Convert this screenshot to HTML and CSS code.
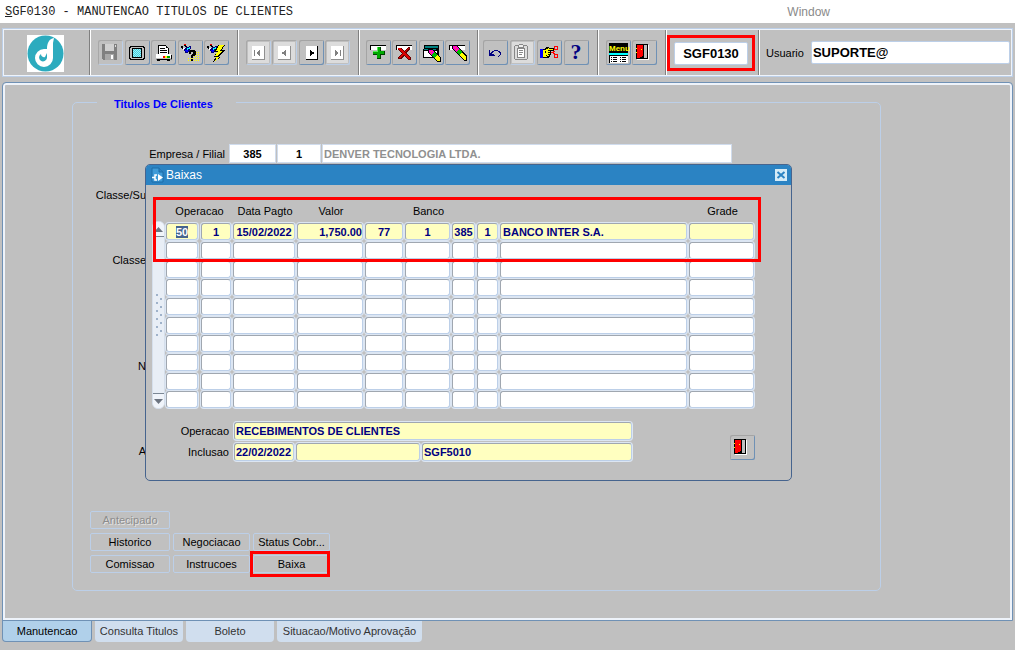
FILE: index.html
```html
<!DOCTYPE html>
<html lang="pt-br">
<head>
	<meta charset="utf-8">
	<title>SGF0130 - MANUTENCAO TITULOS DE CLIENTES</title>
	<link rel="stylesheet" href="styles.css">
	<script src="baixas.js" defer></script>
</head>
<body>

	<header class="titlebar">
		<h1><u>S</u>GF0130 - MANUTENCAO TITULOS DE CLIENTES</h1>
		<span class="window-menu">Window</span>
	</header>

	<div class="toolbar">
		<div class="logo">
			<svg width="37" height="37" viewBox="0 0 37 37">
				<rect width="37" height="37" fill="#fff"/>
				<circle cx="18.5" cy="18.5" r="18" fill="#2cabbe"/>
				<path d="M27 3 C22 4 20 8 20 14 H17 A9 9 0 1 0 26 23 V8 Z" fill="#fff"/>
				<path d="M20 18 V23 A4 4 0 1 1 14 19 A3 3 0 0 0 18 22 Z" fill="#2cabbe"/>
			</svg>
		</div>

		<div class="group group-file">
			<button class="tool off" aria-label="Salvar"><svg viewBox="0 0 25 25">
				<path d="M4 4H19V20H5L4 19Z" fill="#808080"/><path d="M7 4H16V11H7Z" fill="#d0d0d0"/><path d="M7 14H16V20H7Z" fill="#a8a8a8"/><path d="M13 15H15V19H13Z" fill="#fff"/><path d="M17 5H18V7H17Z" fill="#ddd"/>
			</svg></button>
			<button class="tool" aria-label="Tela"><svg viewBox="0 0 25 25">
				<defs>
					<pattern id="cyan-dots" width="2" height="2" patternUnits="userSpaceOnUse"><path d="M0 0H2V2H0Z" fill="#a0f0f8"/><path d="M0 0H1V1H0ZM1 1H2V2H1Z" fill="#40d0e0"/></pattern>
					<pattern id="yellow-dots" width="2" height="2" patternUnits="userSpaceOnUse"><path d="M0 0H1V1H0Z" fill="#ff0"/></pattern>
				</defs>
				<path d="M5 6H19V7H20V19H19V20H5V19H4V7H5Z" fill="#000"/><path d="M6 7H18V8H19V18H18V19H6V18H5V8H6Z" fill="#c0c0c0"/><path d="M7 8H17V18H7Z" fill="#000"/><path d="M8 9H16V17H8Z" fill="url(#cyan-dots)"/>
			</svg></button>
			<button class="tool" aria-label="Imprimir"><svg viewBox="0 0 25 25">
				<path d="M7 5H15V6H16V7H17V8H18V15H7Z" fill="#000"/><path d="M8 6H15V8H17V14H8Z" fill="#fff"/><path d="M9 8H14V9H9ZM9 10H16V11H9ZM9 12H16V13H9Z" fill="#000"/><path d="M5 14H20V15H21V20H5Z" fill="#808080"/><path d="M5 14H20V19H5Z" fill="#fff"/><path d="M5 18H20V19H5Z" fill="#c0c0c0"/><path d="M12 16H14V18H12Z" fill="red"/><path d="M14 16H16V18H14Z" fill="#ff0"/><path d="M16 16H19V18H16Z" fill="#0a0"/><path d="M6 19H19V20H6ZM6 20H9V21H6ZM16 20H19V21H16ZM20 15H21V19H20Z" fill="#000"/>
			</svg></button>
			<button class="tool" aria-label="Entrar consulta"><svg viewBox="0 0 25 25">
				<g id="torch"><path d="M3 6H5V8H7V9H4V8H3ZM6 4H8V6H9V8H8V7H7V6H6Z" fill="#000"/><path d="M6 4H8V5H6Z" fill="red"/><path d="M8 7H11V6H13V9H12V12H10V13H7V11H6V9H7V8H8Z" fill="#000080"/><path d="M9 8H11V7H12V9H10V10H9Z" fill="#0ff"/><path d="M7 10H10V12H8V11H7Z" fill="#00f"/><path d="M5 8H7V9H6V10H5Z" fill="#fff"/></g>
				<path d="M15 12H21V21H10V17H15Z" fill="url(#yellow-dots)"/>
				<path d="M11 11H12V10H17V11H18V15H17V16H15V18H13V15H14V14H15V12H13V14H11ZM13 19H15V21H13Z" fill="#000"/>
			</svg></button>
			<button class="tool" aria-label="Executar consulta"><svg viewBox="0 0 25 25">
				<use href="#torch"/>
				<path d="M14 5H21L18 10H21L14 17H17L9 22L12 17H10L13 12H10Z" fill="#000"/><path d="M15 5H20L16 11H19L12 17H16L11 21L13 16H11L14 11H12Z" fill="#ff0"/>
			</svg></button>
		</div>

		<div class="group group-nav">
			<button class="tool pale" aria-label="Primeiro"><svg viewBox="0 0 25 25">
				<path d="M6 6H19V20H6Z" fill="#909090"/><path d="M6 6H18V19H6Z" fill="#fff"/><path d="M8 10H9V16H8ZM14 10V16H13V15H12V14H11V12H12V11H13V10Z" fill="#808080"/>
			</svg></button>
			<button class="tool pale" aria-label="Anterior"><svg viewBox="0 0 25 25">
				<path d="M6 6H19V20H6Z" fill="#909090"/><path d="M6 6H18V19H6Z" fill="#fff"/><path d="M14 10V16H13V15H12V14H10V12H12V11H13V10Z" fill="#808080"/>
			</svg></button>
			<button class="tool" aria-label="Proximo"><svg viewBox="0 0 25 25">
				<path d="M7 6H19V20H7Z" fill="#000"/><path d="M7 6H18V19H7Z" fill="#fff"/><path d="M11 10H12V11H13V12H15V14H13V15H12V16H11Z" fill="#000"/>
			</svg></button>
			<button class="tool pale" aria-label="Ultimo"><svg viewBox="0 0 25 25">
				<path d="M6 6H19V20H6Z" fill="#909090"/><path d="M6 6H18V19H6Z" fill="#fff"/><path d="M10 10H11V11H12V12H13V14H12V15H11V16H10ZM15 10H16V16H15Z" fill="#808080"/>
			</svg></button>
		</div>

		<div class="group group-record">
			<button class="tool" aria-label="Inserir"><svg viewBox="0 0 25 25">
				<g id="record"><path d="M4 5H20V10H4Z" fill="#fff"/><path d="M4 5H20V6H5V10H4Z" fill="#000"/></g>
				<path d="M11 7H15V11H19V15H15V19H11V15H7V11H11Z" fill="#004000"/><path d="M11 7H14V11H18V14H14V18H11V14H7V11H11Z" fill="#0a0"/><path d="M11 7H12V12H7V11H11Z" fill="#5e5"/>
			</svg></button>
			<button class="tool" aria-label="Remover"><svg viewBox="0 0 25 25">
				<use href="#record"/>
				<path d="M6 8H9L12 11L16 7H18V9L14 13L19 18V20H17L12 16L9 19H6V17L10 13L6 10Z" fill="#600"/><path d="M6 8H8L12 12L16 8H17L13 13L18 18V19H17L12 15L8 18H6L11 13L6 9Z" fill="#d00"/>
			</svg></button>
			<button class="tool" aria-label="Limpar bloco"><svg viewBox="0 0 25 25">
				<path d="M5 5H20V18H4V9H5Z" fill="#000"/><path d="M6 6H19V8H6Z" fill="#008080"/><path d="M5 11H18V17H5Z" fill="#fff"/><path d="M5 9H17V10H5Z" fill="#008080"/>
				<path d="M9 9H14L22 18V22H18L9 13Z" fill="#000"/><path d="M10 10H13L15 12L12 15L10 13Z" fill="#f0c"/><path d="M12 11H13V12H12ZM11 13H12V14H11Z" fill="#f80"/><path d="M15 12L18 15L15 18L12 15Z" fill="#0b0"/><path d="M18 15L21 18V21H18L15 18Z" fill="#ff0"/>
			</svg></button>
			<button class="tool" aria-label="Limpar registro"><svg viewBox="0 0 25 25">
				<use href="#record"/>
				<path d="M7 5H12L22 16V21H19L7 9Z" fill="#000"/><path d="M8 6H11L14 9L11 12L8 8Z" fill="#f0c"/><path d="M10 7H11V8H10ZM11 9H12V10H11Z" fill="#f80"/><path d="M14 9L17 12L14 15L11 12Z" fill="#0b0"/><path d="M17 12L21 17V20H19L14 15Z" fill="#ff0"/>
			</svg></button>
		</div>

		<div class="group group-edit">
			<button class="tool" aria-label="Desfazer"><svg viewBox="0 0 25 25">
				<path d="M6 10H7V13H8V12H9V11H11V10H15V11H17V12H18V15H17V16H16V17H15V16H16V15H17V13H16V12H15V11H11V12H10V13H9V14H11V15H12V16H6Z" fill="#000080"/>
			</svg></button>
			<button class="tool pale" aria-label="Lista"><svg viewBox="0 0 25 25">
				<path d="M5 5H17V6H18V19H17V20H5V19H4V6H5Z" fill="#888"/><path d="M5 6H17V19H5Z" fill="#ddd"/><path d="M7 8H15V18H7Z" fill="#888"/><path d="M8 9H14V17H8Z" fill="#fff"/><path d="M8 5H9V4H13V5H14V8H8Z" fill="#888"/><path d="M9 5H13V7H9Z" fill="#eee"/><path d="M9 10H13V11H9ZM9 12H13V13H9ZM9 14H12V15H9Z" fill="#888"/>
			</svg></button>
			<button class="tool" aria-label="Recortar"><svg viewBox="0 0 25 25">
				<path d="M3 9H6V18H3Z" fill="#00f"/><path d="M6 9H8V8H9V7H12V8H17V11H14V15H13V17H12V18H6Z" fill="#000"/><path d="M6 10H9V9H11V8H12V9H16V10H11V11H13V12H11V13H13V14H11V15H12V16H10V17H6Z" fill="#ff0"/><path d="M8 11H9V13H8ZM9 15H10V16H9Z" fill="#000"/>
				<path d="M14 12H16V11H18V12H17V13H18V14H16V13H14Z" fill="red"/><path d="M17.500 6.500H20.500V9.500H17.500ZM17.500 14.500H20.500V17.500H17.500Z" fill="none" stroke="red"/>
			</svg></button>
			<button class="tool" aria-label="Ajuda"><svg viewBox="0 0 25 25">
				<text x="12" y="19" class="help-glyph">?</text>
			</svg></button>
		</div>

		<div class="group group-exit">
			<button class="tool" aria-label="Menu"><svg viewBox="0 0 25 25">
				<path d="M3 3H22V15H3Z" fill="#000"/><text x="3" y="11" class="menu-glyph">Menu</text>
				<path d="M3 13H22V15H3Z" fill="#0ff"/><path d="M3 15H22V16H3Z" fill="#000"/><path d="M3 16H22V23H3Z" fill="#fff"/><path d="M3 16H4V23H3Z" fill="#000"/>
				<path d="M5 17.500H12M14 17.500H21M5 19.500H12M14 19.500H21M5 21.500H12M14 21.500H21" stroke="#000" stroke-dasharray="1 1 4 1"/>
			</svg></button>
			<button class="tool" aria-label="Sair"><svg viewBox="0 0 25 25">
				<g id="door"><path d="M5 5H17V20H5Z" fill="#fff"/><path d="M4 4H16V19H4Z" fill="#000"/><path d="M12 5H15V18H12Z" fill="#c0c0c0"/><path d="M5 5H11V16H10V17H8V18H5Z" fill="red"/><path d="M4 8H5V9H4ZM4 12H5V13H4ZM9 9H10V10H9Z" fill="#ff0"/></g>
			</svg></button>
		</div>

		<div class="group group-code">
			<div class="mark"><input class="code" type="text" value="SGF0130" aria-label="Programa"></div>
		</div>

		<div class="group group-user">
			<label for="usuario">Usuario</label>
			<input id="usuario" type="text" value="SUPORTE@">
		</div>
	</div>

	<main class="panel">
		<fieldset class="titulos">
			<legend>Titulos De Clientes</legend>

			<div class="empresa">
				<label for="empresa">Empresa / Filial</label>
				<input id="empresa" class="num-empresa" type="text" value="385">
				<input class="num-filial" type="text" value="1" aria-label="Filial">
				<input class="nome" type="text" value="DENVER TECNOLOGIA LTDA." aria-label="Nome" disabled>
			</div>

			<div class="captions">
				<span>Classe/Su</span>
				<span class="cap-classe">Classe</span>
				<span class="cap-n">N</span>
				<span class="cap-a">A</span>
			</div>

			<div class="actions">
				<button class="first" disabled>Antecipado</button>
				<button>Historico</button>
				<button>Negociacao</button>
				<button>Status Cobr...</button>
				<button>Comissao</button>
				<button>Instrucoes</button>
				<div class="mark-baixa"><button>Baixa</button></div>
			</div>
		</fieldset>

		<section class="dialog" role="dialog" aria-labelledby="dlg-title">
			<div class="dialog-title">
				<svg width="13" height="16" viewBox="0 0 13 16">
					<path d="M1 1H8L12 5V15H1Z" fill="#3f9bd8" stroke="#1d6da8"/><path d="M8 1V5H12" fill="#2b83c3" stroke="#1d6da8"/>
					<path d="M7 7L12 10.500L7 14Z" fill="#fff"/><path d="M6 8H4V13H6M1 10.500H4" fill="none" stroke="#fff" stroke-width="1.500"/>
				</svg>
				<h2 id="dlg-title">Baixas</h2>
				<button class="close" aria-label="Fechar"><svg width="12" height="12" viewBox="0 0 12 12"><path d="M2.500 3L9.500 9M9.500 3L2.500 9" stroke="#2b83c3" stroke-width="2"/></svg></button>
			</div>

			<div class="dialog-body">
				<div class="grid-row">
					<div class="scroller">
						<button aria-label="Acima"><svg width="9" height="5" viewBox="0 0 9 5"><path d="M4.500 0L9 5H0Z" fill="#6c7480"/></svg></button>
						<div class="grip"></div>
						<button aria-label="Abaixo"><svg width="9" height="5" viewBox="0 0 9 5"><path d="M0 0H9L4.500 5Z" fill="#6c7480"/></svg></button>
					</div>
					<table>
						<colgroup>
							<col class="c-oper"><col class="c-seq"><col class="c-data"><col class="c-valor"><col class="c-banco"><col class="c-agencia"><col class="c-empresa"><col class="c-filial"><col class="c-nome"><col class="c-grade">
						</colgroup>
						<thead>
							<tr>
								<th colspan="2">Operacao</th>
								<th>Data Pagto</th>
								<th>Valor</th>
								<th></th>
								<th>Banco</th>
								<th></th>
								<th></th>
								<th></th>
								<th>Grade</th>
							</tr>
						</thead>
						<tbody id="linhas"></tbody>
					</table>
					<div class="mark-rows"></div>
				</div>

				<div class="footer">
					<div class="details">
						<label for="det-oper">Operacao</label>
						<input id="det-oper" class="wide" type="text" value="RECEBIMENTOS DE CLIENTES">
						<label for="det-incl">Inclusao</label>
						<input id="det-incl" type="text" value="22/02/2022">
						<input type="text" aria-label="Usuario inclusao">
						<input type="text" value="SGF5010" aria-label="Programa inclusao">
					</div>
					<button class="tool" aria-label="Sair"><svg viewBox="0 0 25 25"><use href="#door"/></svg></button>
				</div>
			</div>
		</section>
	</main>

	<nav class="tabs">
		<a class="tab-manutencao active" href="#">Manutencao</a>
		<a class="tab-consulta" href="#">Consulta Titulos</a>
		<a class="tab-boleto" href="#">Boleto</a>
		<a class="tab-situacao" href="#">Situacao/Motivo Aprovação</a>
	</nav>

</body>
</html>
```

FILE: styles.css
```css
* { box-sizing: border-box; }

body {
	margin: 0;
	min-height: 100vh;
	background: #c0c0c0;
	color: #000;
	font: 11px/14px "Liberation Sans", Arial, sans-serif;
}

button, input {
	margin: 0;
	padding: 0;
	border: 0;
	color: inherit;
	font: inherit;
}

input {
	min-width: 0;
	font-weight: bold;
	outline: none;
}

h1, h2 { margin: 0; font-weight: normal; }

/* title bar */
.titlebar {
	display: flex;
	align-items: center;
	height: 23px;
	padding: 0 185px 0 5px;
	background: #fff;
}

.titlebar h1 {
	flex: 1;
	color: #222;
	font: 12px/14px "Liberation Mono", "Courier New", monospace;
}

.window-menu { color: #8a8a8a; font-size: 12px; }

/* toolbar */
.toolbar {
	display: flex;
	height: 49px;
	margin: 5px 2px;
	border: 1px solid #bccfe8;
	box-shadow: inset 0 0 0 1px #eef3fa;
}

.logo {
	width: 86px;
	padding: 6px 0 0 24px;
}

.group {
	display: flex;
	align-items: center;
	justify-content: space-between;
	border-left: 1px solid #808080;
	box-shadow: inset 1px 0 0 #fff;
	padding: 0 8px;
	margin: 1px 0;
}

.group-file { width: 148px; }
.group-nav { width: 121px; }
.group-record { width: 119px; padding-left: 7px; padding-right: 7px; }
.group-edit { width: 120px; padding-left: 5px; }
.group-exit { width: 68px; }
.group-code { width: 93px; padding: 0 1px; }
.group-user { flex: 1; padding: 0 2px 0 7px; gap: 7px; }

.tool {
	width: 25px;
	height: 25px;
	background: #c0c0c0;
	border-radius: 2px;
	box-shadow: inset 1px 1px 0 #a4a4a4, inset -1px -1px 0 #6f91b5;
}

.tool.off { box-shadow: inset 1px 1px 0 #a8a8a8, inset -1px -1px 0 #bccfe8; }

.tool.pale {
	background: #dcdcdc;
	box-shadow: inset 1px 1px 0 #a8a8a8, inset -1px -1px 0 #bccfe8, inset 0 0 0 2px #c0c0c0;
}

.tool svg {
	display: block;
	width: 25px;
	height: 25px;
	shape-rendering: crispEdges;
}

.help-glyph {
	fill: #000080;
	font: bold 22px "Liberation Serif", serif;
	text-anchor: middle;
}

.menu-glyph {
	fill: #ff0;
	font: bold 8px "Liberation Sans", sans-serif;
}

.mark {
	display: flex;
	width: 88px;
	height: 36px;
	padding: 4px;
	border: 3px solid #f00;
}

.code, .group-user input {
	height: 23px;
	border: 1px solid #bccfe8;
	border-radius: 2px;
	font-size: 13px;
}

.code { width: 100%; text-align: center; }
.group-user input { flex: 1; padding-left: 1px; }

/* main panel */
.panel {
	position: relative;
	margin: 0 2px;
	padding: 11px 131px 29px 69px;
	border: 1px solid #6f91b5;
	border-radius: 4px 4px 0 0;
	box-shadow: inset 0 0 0 2px #eef3fa;
}

.titulos {
	min-width: 0;
	margin: 0;
	padding: 0 17px 17px;
	border: 1px solid #bccfe8;
	border-radius: 5px;
}

.titulos legend {
	margin-left: 7px;
	padding: 3px 23px 0 17px;
	color: #00f;
	font-weight: bold;
}

.empresa {
	display: flex;
	align-items: center;
	gap: 1px;
	padding-top: 33px;
}

.empresa label { width: 138px; padding-right: 3px; text-align: right; }

.empresa input {
	height: 19px;
	background: #fff;
	border: 1px solid #d0dced;
}

.empresa .num-empresa { width: 47px; text-align: center; }
.empresa .num-filial { width: 44px; text-align: center; }
.empresa .nome { width: 410px; padding-left: 1px; color: #909090; }

.captions {
	display: flex;
	flex-direction: column;
	width: 56px;
	padding-top: 25px;
	text-align: right;
}

.cap-classe { margin-top: 51px; }
.cap-n { margin-top: 92px; }
.cap-a { margin-top: 71px; }

.actions {
	display: grid;
	grid-template-columns: 80px 77px 77px;
	grid-auto-rows: 18px;
	gap: 4px 3px;
	margin-top: 53px;
}

.actions button {
	width: 100%;
	height: 18px;
	background: none;
	border: 1px solid #bccfe8;
	border-radius: 2px;
}

.actions .first { grid-column: 1 / 4; width: 80px; }
.actions button:disabled { color: #8c8c8c; text-shadow: 1px 1px 0 #e4e4e4; }

.mark-baixa { position: relative; }

.mark-baixa::after {
	content: "";
	position: absolute;
	inset: -4px 0 -4px -3px;
	border: 3px solid #f00;
}

/* Baixas window */
.dialog {
	position: absolute;
	top: 81px;
	left: 142px;
	width: 647px;
	background: #c0c0c0;
	border: 1px solid #46648e;
	border-radius: 5px;
	overflow: hidden;
}

.dialog-title {
	display: flex;
	align-items: center;
	gap: 2px;
	height: 20px;
	padding: 0 4px 0 5px;
	background: #2b83c3;
}

.dialog-title h2 {
	flex: 1;
	color: #fff;
	font-size: 12px;
}

.close {
	width: 12px;
	height: 12px;
	background: #d4ebf7;
}

.close svg { display: block; }

.dialog-body { padding: 16px 34px 19px 6px; }

.grid-row { position: relative; display: flex; }

.scroller {
	display: flex;
	flex-direction: column;
	width: 13px;
	margin: 20px 1px 0 0;
	background: #e8eef6;
	border: 1px solid #d5dfec;
	border-radius: 6px;
	overflow: hidden;
}

.scroller button {
	height: 15px;
	background: #f0f4fa;
	border-bottom: 1px solid #7b8794;
	line-height: 0;
}

.scroller button:last-child { border-bottom: 0; border-top: 1px solid #7b8794; }

.grip {
	width: 8px;
	height: 44px;
	margin: auto;
	background: radial-gradient(circle at 2px 2px, #9fb2ca 1px, transparent 1px) 0 0 / 8px 8px, radial-gradient(circle at 2px 2px, #9fb2ca 1px, transparent 1px) 4px 4px / 8px 8px;
}

table {
	width: 590px;
	table-layout: fixed;
	border-collapse: collapse;
}

.c-oper { width: 35px; }
.c-seq { width: 32px; }
.c-data { width: 64px; }
.c-valor { width: 68px; }
.c-banco { width: 40px; }
.c-agencia { width: 47px; }
.c-empresa { width: 25px; }
.c-filial { width: 23px; }
.c-nome { width: 189px; }
.c-grade { width: 67px; }

th {
	height: 21px;
	padding: 0 0 2px;
	font-weight: normal;
	white-space: nowrap;
}

td { height: 19px; padding: 0 1px 0 0; }
tbody tr:nth-child(3n) td { height: 18px; }
td:first-child { padding-right: 2px; }

td input, .details input {
	display: block;
	width: 100%;
	height: 18px;
	background: #fff;
	color: #000080;
	border: 1px solid #a0a7b0;
	border-right-color: #bccfe8;
	border-bottom-color: #bccfe8;
	border-radius: 3px;
	box-shadow: 0 0 0 1px #dce6f3;
	text-align: center;
}

td input { height: 17px; width: calc(100% - 1px); }

.current input { background: #ffffc0; }
td.right input { text-align: right; }
td.left input { text-align: left; padding-left: 2px; }

td input::selection { background: #46648e; color: #fff; }

.mark-rows {
	position: absolute;
	top: -4px;
	left: 1px;
	width: 608px;
	height: 65px;
	border: 3px solid #f00;
}

.footer {
	display: flex;
	justify-content: space-between;
	margin-top: 13px;
}

.footer .tool { margin: 13px 2px 0 0; }

.details {
	display: grid;
	grid-template-columns: 78px 60px 124px 210px;
	grid-auto-rows: 18px;
	align-items: center;
	gap: 3px 2px;
	padding-left: 2px;
}

.details label { padding-right: 3px; text-align: right; }
.details input { text-align: left; padding-left: 1px; background: #ffffc0; }
.details .wide { grid-column: 2 / 5; }

/* bottom tabs */
.tabs {
	display: flex;
	gap: 3px;
	padding-left: 2px;
}

.tabs a {
	height: 21px;
	background: #d0deee;
	border-radius: 0 0 4px 4px;
	color: #333;
	line-height: 20px;
	text-align: center;
	text-decoration: none;
}

.tabs .active {
	height: 22px;
	margin-top: -1px;
	background: #b0d0ea;
	border: 1px solid #6f91b5;
	border-top: 0;
	color: #000;
	line-height: 22px;
}

.tab-manutencao { width: 90px; }
.tab-consulta { width: 88px; }
.tab-boleto { width: 88px; }
.tab-situacao { width: 145px; }
```

FILE: baixas.js
```js
var COLS = 10;
var ROWS = 10;
var baixa = ["50", "1", "15/02/2022", "1,750.00", "77", "1", "385", "1", "BANCO INTER S.A.", ""];
var align = { 3: "right", 8: "left" };
var tbody = document.getElementById("linhas");

for (var r = 0; r < ROWS; r++) {
	var tr = tbody.insertRow();
	if (r === 0) { tr.className = "current"; }
	for (var c = 0; c < COLS; c++) {
		var td = tr.insertCell();
		var input = document.createElement("input");
		input.type = "text";
		input.value = r === 0 ? baixa[c] : "";
		input.setAttribute("aria-label", "Linha " + (r + 1) + " coluna " + (c + 1));
		if (align[c]) { td.className = align[c]; }
		td.appendChild(input);
	}
}

// the form opens with the first field selected
var first = tbody.querySelector("input");
first.focus();
first.select();
```
